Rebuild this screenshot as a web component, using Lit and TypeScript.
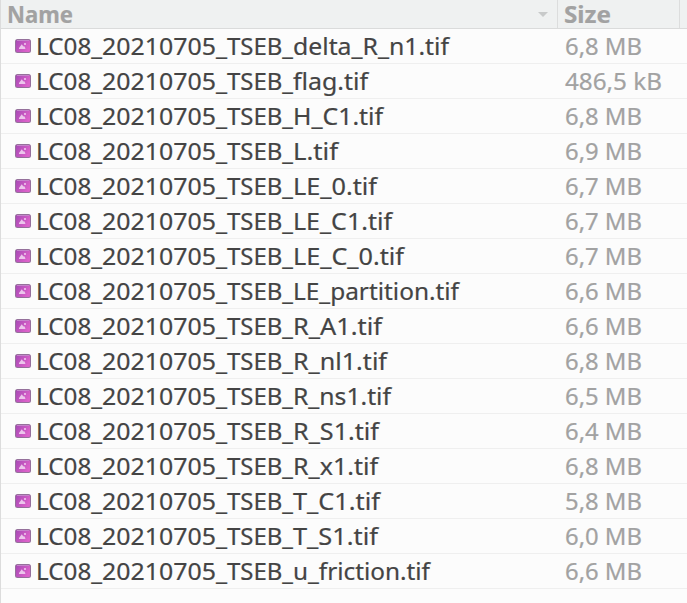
import { LitElement, html, svg, css } from "lit";
import { customElement, property } from "lit/decorators.js";

interface FileRow {
  stem: string;
  width: number;
  size: string;
}

const files: FileRow[] = [
  { stem: "delta_R_n1.tif", width: 156, size: "6,8 MB" },
  { stem: "flag.tif", width: 75, size: "486,5 kB" },
  { stem: "H_C1.tif", width: 90, size: "6,8 MB" },
  { stem: "L.tif", width: 45, size: "6,9 MB" },
  { stem: "LE_0.tif", width: 84, size: "6,7 MB" },
  { stem: "LE_C1.tif", width: 99, size: "6,7 MB" },
  { stem: "LE_C_0.tif", width: 111, size: "6,7 MB" },
  { stem: "LE_partition.tif", width: 166, size: "6,6 MB" },
  { stem: "R_A1.tif", width: 89, size: "6,6 MB" },
  { stem: "R_nl1.tif", width: 94, size: "6,8 MB" },
  { stem: "R_ns1.tif", width: 98, size: "6,5 MB" },
  { stem: "R_S1.tif", width: 86, size: "6,4 MB" },
  { stem: "R_x1.tif", width: 85, size: "6,8 MB" },
  { stem: "T_C1.tif", width: 87, size: "5,8 MB" },
  { stem: "T_S1.tif", width: 85, size: "6,0 MB" },
  { stem: "u_friction.tif", width: 137, size: "6,6 MB" },
];

/* A run of text fitted to a given advance width. */
@customElement("fit-text")
class FitText extends LitElement {
  static styles = css`
    :host { display: block; flex: none; }
    .run { display: block; overflow: visible; }
    .glyphs {
      fill: currentColor;
      stroke: currentColor;
      stroke-width: 0.2px;
      font: inherit;
      white-space: pre;
    }
  `;
  @property() text = "";
  @property({ type: Number }) width = 0;
  @property({ type: Number }) baseline = 26;
  render() {
    return html`<svg class="run" width=${this.width} height=${this.baseline + 2}>
      ${svg`<text class="glyphs" x="0" y=${this.baseline} textLength=${this.width} lengthAdjust="spacingAndGlyphs">${this.text}</text>`}
    </svg>`;
  }
}

@customElement("image-icon")
class ImageIcon extends LitElement {
  static styles = css`
    :host { display: block; flex: none; width: 16px; height: 14px; }
    .icon { display: block; }
  `;
  render() {
    return html`<svg class="icon" width="16" height="14" viewBox="0 0 16 14">
      <defs>
        <linearGradient id="g" x1="0" y1="0" x2="1" y2="0.5">
          <stop offset="0" stop-color="#a649b5" />
          <stop offset="1" stop-color="#dc62ca" />
        </linearGradient>
      </defs>
      <rect x="0" y="0" width="16" height="14" rx="2.5" fill="#95709b" />
      <rect x="1" y="1" width="14" height="12" rx="1.2" fill="url(#g)" />
      <path d="M2 1.5H14" stroke="#c583cb" stroke-width="1" />
      <path d="M4 10V9L6.8 5.2L8.3 7.6L9.1 7L10.3 9V10Z" fill="#ecc6ec" />
      <rect x="9" y="4" width="2" height="2" fill="#e6b2e4" />
    </svg>`;
  }
}

@customElement("app-root")
class AppRoot extends LitElement {
  static styles = css`
    :host {
      display: block;
      box-sizing: border-box;
      height: 603px;
      overflow: hidden;
      border-left: 1px solid #dcdcdc;
      background: #fcfcfc;
      color: #444;
      font: 23.3px/1 "Noto Sans", sans-serif;
    }
    .line { display: grid; grid-template-columns: 556px 1fr; box-sizing: border-box; }
    .head {
      grid-template-columns: 557px 122px 1fr;
      height: 29px;
      background: #eff1f1;
      border-bottom: 1px solid #dadbdb;
      color: #a2a2a2;
      font-weight: 700;
    }
    .cell { display: flex; box-sizing: border-box; }
    .head .cell { height: 28px; border-right: 1px solid #dcdddd; }
    .head .cell:last-child { border-right: 0; }
    .size-title { padding-left: 6px; }
    .name-title { padding-left: 5.5px; padding-right: 9px; justify-content: space-between; }
    .arrow { display: block; margin-top: 12px; }
    .row { height: 35px; border-bottom: 1px solid #efefef; }
    .file { padding-left: 14px; }
    .file image-icon { margin: 10px 5px 0 0; }
    .size { padding-left: 8px; color: #a2a2a2; }
  `;
  render() {
    return html`
      <div class="line head">
        <div class="cell name-title">
          <fit-text text="Name" width="66" baseline="23"></fit-text>
          <svg class="arrow" width="10" height="5" viewBox="0 0 10 5"><path d="M0 0H10L5 5Z" fill="#c8caca" /></svg>
        </div>
        <div class="cell size-title"><fit-text text="Size" width="47" baseline="23"></fit-text></div>
        <div class="cell"></div>
      </div>
      ${files.map(
        (f) => html`<div class="line row">
          <div class="cell file">
            <image-icon></image-icon>
            <fit-text text="LC08_" width="66"></fit-text>
            <fit-text text="20210705_" width="125"></fit-text>
            <fit-text text="TSEB_" width="66"></fit-text>
            <fit-text text=${f.stem} width=${f.width}></fit-text>
          </div>
          <div class="cell size">
            <fit-text text=${f.size} width=${f.size.length > 6 ? 97 : 77}></fit-text>
          </div>
        </div>`
      )}
    `;
  }
}
